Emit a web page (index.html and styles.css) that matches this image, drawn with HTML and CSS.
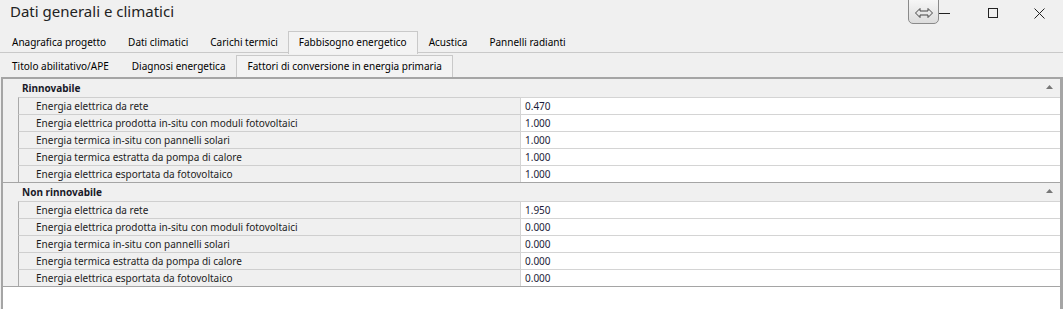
FILE: index.html
```html
<!DOCTYPE html>
<html lang="it">
<head>
    <meta charset="UTF-8">
    <meta name="viewport" content="width=device-width, initial-scale=1.0">
    <title>Dati generali e climatici</title>
    <link rel="stylesheet" href="styles.css">
</head>
<body>
    <div class="window">
        <header class="titlebar">
            <span class="title">Dati generali e climatici</span>
            <button class="dock" title="Aggancia">
                <svg width="18" height="10" viewBox="0 0 18 10">
                    <path d="M0.5 5 L5 0.5 V3 H13 V0.5 L17.5 5 L13 9.5 V7 H5 V9.5 Z" fill="none" stroke="#444" stroke-width="1"/>
                </svg>
            </button>
            <div class="caption">
                <span class="cap-btn">
                    <svg width="11" height="11" viewBox="0 0 11 11"><path d="M0 5.5 H11" stroke="#222" stroke-width="1"/></svg>
                </span>
                <span class="cap-btn">
                    <svg width="10" height="10" viewBox="0 0 10 10"><rect x="0.5" y="0.5" width="9" height="9" fill="none" stroke="#222" stroke-width="1"/></svg>
                </span>
                <span class="cap-btn">
                    <svg width="11" height="11" viewBox="0 0 11 11"><path d="M0.5 0.5 L10.5 10.5 M10.5 0.5 L0.5 10.5" stroke="#222" stroke-width="1"/></svg>
                </span>
            </div>
        </header>

        <nav class="tabs main-tabs">
            <a href="#">Anagrafica progetto</a>
            <a href="#">Dati climatici</a>
            <a href="#">Carichi termici</a>
            <a href="#" class="active">Fabbisogno energetico</a>
            <a href="#">Acustica</a>
            <a href="#">Pannelli radianti</a>
        </nav>

        <nav class="tabs sub-tabs">
            <a href="#">Titolo abilitativo/APE</a>
            <a href="#">Diagnosi energetica</a>
            <a href="#" class="active">Fattori di conversione in energia primaria</a>
        </nav>

        <div class="grid">
            <section class="group">
                <div class="group-head">
                    <span>Rinnovabile</span>
                    <svg class="collapse" width="7" height="4" viewBox="0 0 7 4"><path d="M0 4 L3.5 0 L7 4 Z" fill="#777"/></svg>
                </div>
                <div class="row"><div class="indent"></div><div class="label">Energia elettrica da rete</div><div class="value">0.470</div></div>
                <div class="row"><div class="indent"></div><div class="label">Energia elettrica prodotta in-situ con moduli fotovoltaici</div><div class="value">1.000</div></div>
                <div class="row"><div class="indent"></div><div class="label">Energia termica in-situ con pannelli solari</div><div class="value">1.000</div></div>
                <div class="row"><div class="indent"></div><div class="label">Energia termica estratta da pompa di calore</div><div class="value">1.000</div></div>
                <div class="row"><div class="indent"></div><div class="label">Energia elettrica esportata da fotovoltaico</div><div class="value">1.000</div></div>
            </section>
            <section class="group">
                <div class="group-head">
                    <span>Non rinnovabile</span>
                    <svg class="collapse" width="7" height="4" viewBox="0 0 7 4"><path d="M0 4 L3.5 0 L7 4 Z" fill="#777"/></svg>
                </div>
                <div class="row"><div class="indent"></div><div class="label">Energia elettrica da rete</div><div class="value">1.950</div></div>
                <div class="row"><div class="indent"></div><div class="label">Energia elettrica prodotta in-situ con moduli fotovoltaici</div><div class="value">0.000</div></div>
                <div class="row"><div class="indent"></div><div class="label">Energia termica in-situ con pannelli solari</div><div class="value">0.000</div></div>
                <div class="row"><div class="indent"></div><div class="label">Energia termica estratta da pompa di calore</div><div class="value">0.000</div></div>
                <div class="row"><div class="indent"></div><div class="label">Energia elettrica esportata da fotovoltaico</div><div class="value">0.000</div></div>
            </section>
        </div>
    </div>
</body>
</html>
```

FILE: styles.css
```css
body {
    margin: 0;
    background-color: #f0f0f0;
    font-family: "Noto Sans", "Open Sans", sans-serif;
    font-size: 10px;
    color: #1e1e1e;
}

.window {
    height: 309px;
    display: flex;
    flex-direction: column;
    overflow: hidden;
}

/* title bar */
.titlebar {
    position: relative;
    height: 31px;
    display: flex;
    align-items: flex-start;
    flex-shrink: 0;
}

.title {
    font-size: 15px;
    padding: 1px 0 0 10px;
    color: #222;
}

.dock {
    position: absolute;
    left: 908px;
    top: -1px;
    width: 31px;
    height: 25px;
    padding: 0;
    border: 1px solid #8a8a8a;
    border-radius: 0 0 5px 5px;
    background: linear-gradient(#f6f6f6, #dcdcdc);
    display: flex;
    align-items: center;
    justify-content: center;
    padding-top: 2px;
}

.caption {
    margin-left: auto;
    display: flex;
}

.cap-btn {
    width: 47px;
    height: 26px;
    display: flex;
    align-items: center;
    justify-content: center;
}

.cap-btn:first-child {
    justify-content: flex-start;
    padding-left: 17px;
    width: 30px;
}

/* tabs */
.tabs {
    display: flex;
    flex-shrink: 0;
}

.tabs a {
    text-decoration: none;
    color: #000;
    white-space: nowrap;
    border: 1px solid transparent;
    border-bottom: none;
}

.main-tabs {
    height: 21px;
    border-bottom: 1px solid #c9c9c9;
}

.main-tabs a {
    line-height: 21px;
    height: 21px;
    padding: 0 10px;
}

.main-tabs a:first-child {
    padding-left: 11px;
}

.main-tabs a.active {
    border-color: #c9c9c9;
    background-color: #f3f3f3;
    height: 22px;
    margin-bottom: -1px;
    margin-left: -1px;
}

.sub-tabs {
    height: 22px;
    padding-top: 2px;
}

.sub-tabs a {
    line-height: 21px;
    padding: 0 10px 0 11px;
}

.sub-tabs a.active {
    border-color: #c9c9c9;
    background-color: #f3f3f3;
    margin-left: -1px;
}

/* property grid */
.grid {
    flex: 1;
    background-color: #fff;
    border-top: 2px solid #a5a5a5;
    border-left: 2px solid #a5a5a5;
    border-right: 3px solid #a5a5a5;
    margin-left: 1px;
}

.group {
    border-bottom: 1px solid #a5a5a5;
}

.group-head {
    height: 18px;
    line-height: 18px;
    background-color: #f0f0f0;
    font-weight: bold;
    padding-left: 19px;
    display: flex;
    align-items: center;
    color: #1a1a28;
}

.collapse {
    margin-left: auto;
    margin-right: 7px;
    margin-top: -2px;
}

.row {
    display: flex;
    height: 17px;
}

.indent {
    width: 15px;
    background-color: #f0f0f0;
}

.label {
    width: 484px;
    padding-left: 17px;
    line-height: 16px;
    background-color: #f0f0f0;
    border-top: 1px solid #cfcfcf;
    border-left: 1px solid #a9a9a9;
    white-space: nowrap;
}

.value {
    flex: 1;
    padding-left: 4px;
    line-height: 16px;
    background-color: #fff;
    border-top: 1px solid #d4d4d4;
    border-left: 1px solid #d4d4d4;
    color: #1c1c3a;
}
```
